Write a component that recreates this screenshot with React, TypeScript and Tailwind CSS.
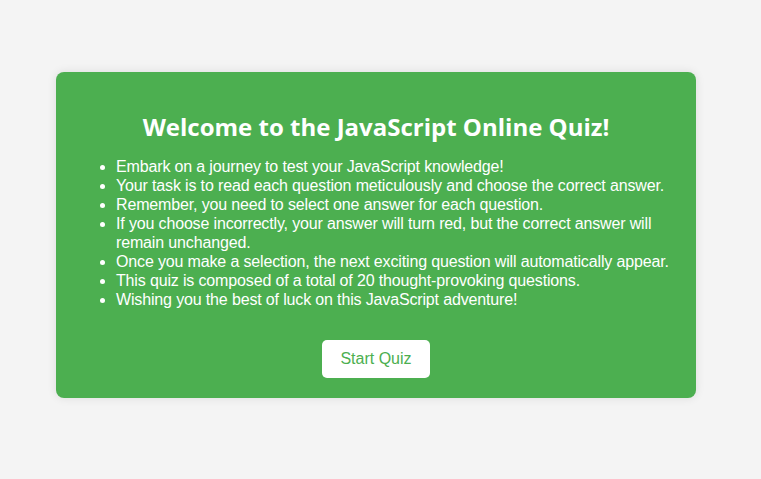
const rules = [
  "Embark on a journey to test your JavaScript knowledge!",
  "Your task is to read each question meticulously and choose the correct answer.",
  "Remember, you need to select one answer for each question.",
  "If you choose incorrectly, your answer will turn red, but the correct answer will remain unchanged.",
  "Once you make a selection, the next exciting question will automatically appear.",
  "This quiz is composed of a total of 20 thought-provoking questions.",
  "Wishing you the best of luck on this JavaScript adventure!",
];

export default function App() {
  return (
    <div className="min-h-screen bg-[#f4f4f4] pt-[72px] font-['Liberation_Sans',Arial,sans-serif]">
      <div className="ml-[56px] w-[640px] rounded-lg bg-[#4caf50] p-5 text-white shadow-[0_0_10px_rgba(0,0,0,0.1)]">
        <h1 className="mt-[19px] mb-[14px] text-center font-['Open_Sans',sans-serif] text-2xl leading-[32px] font-bold">
          Welcome to the JavaScript Online Quiz!
        </h1>
        <ul className="list-disc pl-10 text-base leading-[19px] tracking-[-0.15px]">
          {rules.map((r, i) => (
            <li key={i}>{r}</li>
          ))}
        </ul>
        <div className="mt-[31px] flex justify-center">
          <button className="h-[38px] w-[108px] rounded-[5px] bg-white text-base text-[#4caf50]">
            Start Quiz
          </button>
        </div>
      </div>
    </div>
  );
}
